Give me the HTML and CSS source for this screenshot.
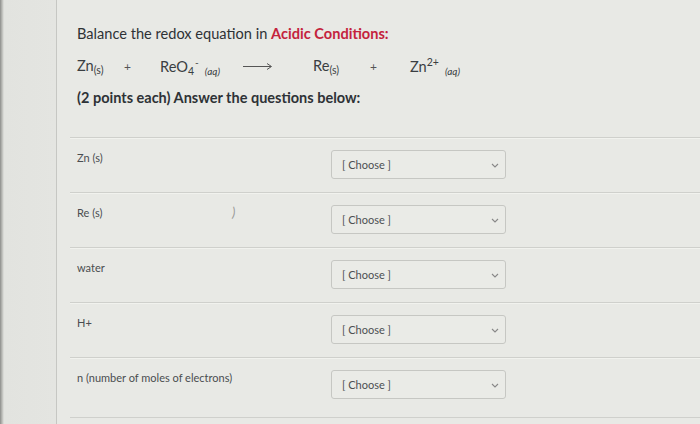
FILE: index.html
```html
<!DOCTYPE html>
<html>
<head>
<meta charset="utf-8">
<link rel="stylesheet" href="styles.css">
</head>
<body>
<div class="page">
  <div class="strip"></div>
  <div class="panel">
    <p class="title">Balance the redox equation in <b class="red">Acidic Conditions:</b></p>
    <div class="eq">
      <span class="c c1">Zn<sub>(s)</sub></span>
      <span class="c c2 plus">+</span>
      <span class="c c3">ReO<sub class="n">4</sub><sup class="m">-</sup><sub class="aq">(aq)</sub></span>
      <span class="c c4"><svg width="30" height="10" viewBox="0 0 30 10"><path d="M0 5.5H28M24 2.5L28.5 5.5L24 8.5" fill="none" stroke="#555" stroke-width="1"/></svg></span>
      <span class="c c5">Re<sub>(s)</sub></span>
      <span class="c c6 plus">+</span>
      <span class="c c7">Zn<sup>2+</sup><sub class="aq">(aq)</sub></span>
    </div>
    <p class="sub">(2 points each) Answer the questions below:</p>
    <div class="rows">
      <div class="row">
        <span class="label">Zn (s)</span>
        <div class="select"><span>[ Choose ]</span><svg class="chev" width="8" height="5" viewBox="0 0 8 5"><path d="M1 1L4 4L7 1" fill="none" stroke="#888" stroke-width="1.1"/></svg></div>
      </div>
      <div class="row">
        <span class="label">Re (s)</span>
        <span class="mark">)</span>
        <div class="select"><span>[ Choose ]</span><svg class="chev" width="8" height="5" viewBox="0 0 8 5"><path d="M1 1L4 4L7 1" fill="none" stroke="#888" stroke-width="1.1"/></svg></div>
      </div>
      <div class="row">
        <span class="label">water</span>
        <div class="select"><span>[ Choose ]</span><svg class="chev" width="8" height="5" viewBox="0 0 8 5"><path d="M1 1L4 4L7 1" fill="none" stroke="#888" stroke-width="1.1"/></svg></div>
      </div>
      <div class="row">
        <span class="label">H+</span>
        <div class="select"><span>[ Choose ]</span><svg class="chev" width="8" height="5" viewBox="0 0 8 5"><path d="M1 1L4 4L7 1" fill="none" stroke="#888" stroke-width="1.1"/></svg></div>
      </div>
      <div class="row last">
        <span class="label">n (number of moles of electrons)</span>
        <div class="select"><span>[ Choose ]</span><svg class="chev" width="8" height="5" viewBox="0 0 8 5"><path d="M1 1L4 4L7 1" fill="none" stroke="#888" stroke-width="1.1"/></svg></div>
      </div>
    </div>
  </div>
</div>
</body>
</html>
```
FILE: styles.css
```css
html, body {
  margin: 0;
  padding: 0;
}
body {
  width: 700px;
  height: 424px;
  overflow: hidden;
  background: #e7e8e4;
  font-family: Lato, "Open Sans", sans-serif;
  color: #2f3438;
}
.page {
  display: flex;
  height: 424px;
}
.strip {
  width: 56px;
  flex: none;
  background: linear-gradient(to right, #8c8d8a 0, #b9bab6 2px, #e2e3df 4px, #e4e5e1 100%);
}
.panel {
  flex: 1;
  border-left: 1px solid #c6c7c3;
  padding: 24px 0 0 20px;
  background: #e8e9e5;
}
.title {
  margin: 0;
  font-size: 14.6px;
  line-height: 20px;
  color: #2e3236;
}
.red {
  color: #c4233d;
  font-weight: 700;
}
.eq {
  display: flex;
  align-items: center;
  margin-top: 12px;
  height: 20px;
  font-size: 14.6px;
  color: #3a3e42;
}
.c { flex: none; white-space: nowrap; }
.c1 { width: 47px; }
.c2 { width: 36px; }
.c3 { width: 83px; }
.c4 { width: 70px; display: flex; align-items: center; }
.c5 { width: 57px; }
.c6 { width: 40px; }
.plus { font-size: 12px; color: #555; }
.eq sub {
  font-size: 10.5px;
  vertical-align: -3px;
}
.eq sup {
  font-size: 10.5px;
  vertical-align: 6px;
}
.eq sub.n { font-size: 10.5px; }
.eq sup.m { margin-left: 1px; font-size: 10px; vertical-align: 6px; }
.eq sub.aq {
  font-style: italic;
  font-size: 10px;
  margin-left: 6px;
  vertical-align: -3px;
}
.sub {
  margin: 12px 0 0;
  font-size: 14.5px;
  line-height: 20px;
  font-weight: 700;
  color: #2e3236;
}
.rows {
  margin: 29px 0 0 -7px;
  border-bottom: 1px solid #cfd0cc;
}
.row {
  position: relative;
  display: flex;
  align-items: flex-start;
  border-top: 1px solid #cfd0cc;
  box-shadow: inset 0 1px 0 #f1f2ee;
  padding: 12px 0 13px 7px;
}
.row.last { padding-bottom: 18px; }
.label {
  width: 254px;
  flex: none;
  padding-top: 1px;
  font-size: 11px;
  line-height: 14px;
  color: #4a4d50;
}
.mark {
  position: absolute;
  left: 162px;
  top: 11px;
  font-size: 13px;
  font-style: italic;
  color: #9a9b98;
}
.select {
  height: 27px;
  border: 1px solid #c6c7c3;
  border-radius: 3px;
  background: #eaebe7;
  display: flex;
  align-items: center;
  justify-content: space-between;
  padding: 0 6px 0 10px;
  box-sizing: content-box;
  width: 157px;
  font-size: 11px;
  color: #4c4f52;
}
.chev { margin-top: 1px; }
```
